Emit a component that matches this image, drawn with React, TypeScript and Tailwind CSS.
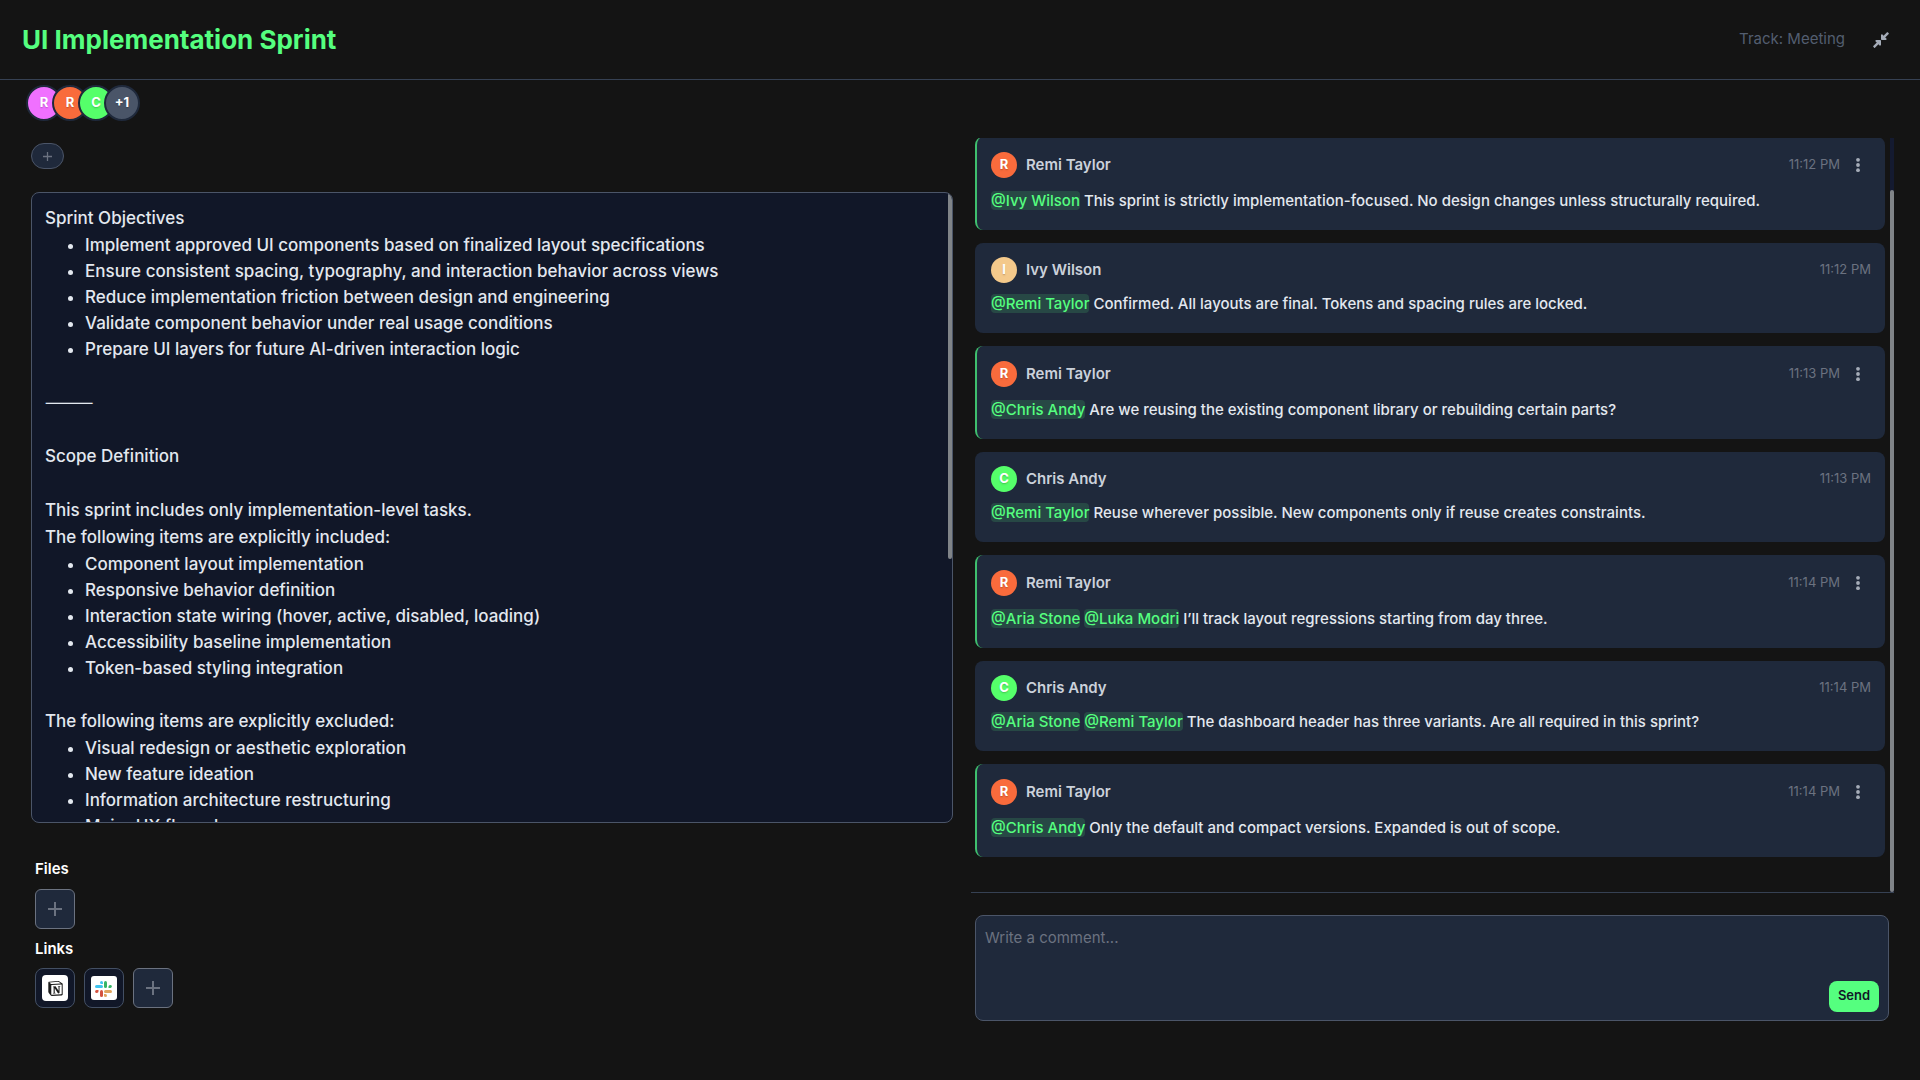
import React from "react";
import { FaCompressAlt } from "react-icons/fa";
import { SiNotion } from "react-icons/si";
import { clsx } from "clsx";

type Block =
  | { kind: "text"; text: string }
  | { kind: "gap" }
  | { kind: "list"; items: string[] };

const notes: Block[] = [
  { kind: "text", text: "Sprint Objectives" },
  {
    kind: "list",
    items: [
      "Implement approved UI components based on finalized layout specifications",
      "Ensure consistent spacing, typography, and interaction behavior across views",
      "Reduce implementation friction between design and engineering",
      "Validate component behavior under real usage conditions",
      "Prepare UI layers for future AI-driven interaction logic",
    ],
  },
  { kind: "gap" },
  { kind: "text", text: "⸻" },
  { kind: "gap" },
  { kind: "text", text: "Scope Definition" },
  { kind: "gap" },
  { kind: "text", text: "This sprint includes only implementation-level tasks." },
  { kind: "text", text: "The following items are explicitly included:" },
  {
    kind: "list",
    items: [
      "Component layout implementation",
      "Responsive behavior definition",
      "Interaction state wiring (hover, active, disabled, loading)",
      "Accessibility baseline implementation",
      "Token-based styling integration",
    ],
  },
  { kind: "gap" },
  { kind: "text", text: "The following items are explicitly excluded:" },
  {
    kind: "list",
    items: [
      "Visual redesign or aesthetic exploration",
      "New feature ideation",
      "Information architecture restructuring",
      "Major UX flow changes",
    ],
  },
];

const people = {
  remi: { name: "Remi Taylor", color: "bg-[#f96b3c]" },
  ivy: { name: "Ivy Wilson", color: "bg-[#f4c98b]" },
  chris: { name: "Chris Andy", color: "bg-[#55ff6a]" },
};

const comments: {
  from: keyof typeof people;
  time: string;
  mentions: string[];
  text: string;
}[] = [
  {
    from: "remi",
    time: "11:12 PM",
    mentions: ["Ivy Wilson"],
    text: "This sprint is strictly implementation-focused. No design changes unless structurally required.",
  },
  {
    from: "ivy",
    time: "11:12 PM",
    mentions: ["Remi Taylor"],
    text: "Confirmed. All layouts are final. Tokens and spacing rules are locked.",
  },
  {
    from: "remi",
    time: "11:13 PM",
    mentions: ["Chris Andy"],
    text: "Are we reusing the existing component library or rebuilding certain parts?",
  },
  {
    from: "chris",
    time: "11:13 PM",
    mentions: ["Remi Taylor"],
    text: "Reuse wherever possible. New components only if reuse creates constraints.",
  },
  {
    from: "remi",
    time: "11:14 PM",
    mentions: ["Aria Stone", "Luka Modri"],
    text: "I’ll track layout regressions starting from day three.",
  },
  {
    from: "chris",
    time: "11:14 PM",
    mentions: ["Aria Stone", "Remi Taylor"],
    text: "The dashboard header has three variants. Are all required in this sprint?",
  },
  {
    from: "remi",
    time: "11:14 PM",
    mentions: ["Chris Andy"],
    text: "Only the default and compact versions. Expanded is out of scope.",
  },
];

const members = [
  { label: "R", color: "bg-[#f070ff]" },
  { label: "R", color: "bg-[#f96b3c]" },
  { label: "C", color: "bg-[#55ff6a]" },
  { label: "+1", color: "bg-[#4a5568]" },
];

const PlusIcon = ({ className }: { className?: string }) => (
  <svg viewBox="0 0 14 14" className={className} aria-hidden="true">
    <path d="M7 0v14M0 7h14" stroke="currentColor" strokeWidth="2" />
  </svg>
);

const DotsIcon = () => (
  <svg viewBox="0 0 16 16" className="size-4" fill="currentColor" aria-hidden="true">
    <circle cx="8" cy="2.8" r="1.9" />
    <circle cx="8" cy="8" r="1.9" />
    <circle cx="8" cy="13.2" r="1.9" />
  </svg>
);

const SlackIcon = () => (
  <svg viewBox="0 0 26 24" className="h-6 w-[26px]" aria-hidden="true">
    <rect width="26" height="24" rx="3" fill="#fff" />
    <g fill="#40c4f0">
      <rect x="4" y="9" width="8" height="3" rx="1.5" />
      <path d="M12 8H10.500A1.500 1.500 0 1 1 12 6.500z" />
    </g>
    <g fill="#36b567">
      <rect x="13" y="5" width="3" height="7" rx="1.5" />
      <path d="M17.500 12v-1.500A1.700 1.500 0 1 1 19.500 12z" />
    </g>
    <g fill="#e0a45e">
      <rect x="13" y="14" width="8" height="3" rx="1.5" />
      <path d="M13 18h1.500a1.500 1.500 0 1 1-1.500 1.500z" />
    </g>
    <g fill="#d4523f">
      <rect x="9" y="14" width="3" height="7" rx="1.5" />
      <path d="M7.500 14v1.500A1.700 1.500 0 1 1 5.500 14z" />
    </g>
  </svg>
);

const Comment = ({ from, time, mentions, text }: (typeof comments)[number]) => {
  const { name, color } = people[from];
  const mine = from === "remi";

  return (
    <li
      className={clsx(
        "shrink-0 rounded-lg bg-[#1f293b] pr-[14px]",
        mine
          ? "h-[93px] border-l-2 border-[#3fbf6e] pl-[14px] pt-[15px]"
          : "h-[90px] pl-4 pt-[14px]"
      )}
    >
      <div className="flex h-[26px] items-center">
        <span
          className={clsx(
            "flex size-[26px] items-center justify-center rounded-full text-[13px] font-bold text-white text-shadow-sm",
            color
          )}
        >
          {name[0]}
        </span>
        <h3 className="ml-[9px] text-[15px] font-semibold text-[#cbd1da]">{name}</h3>
        <time className="ml-auto text-[13px] text-[#6b7280]">{time}</time>
        {mine && (
          <button type="button" aria-label="Comment options" className="ml-2.5 mr-[5px] text-[#a5acb8]">
            <DotsIcon />
          </button>
        )}
      </div>
      <p
        className={clsx(
          "text-[15px] font-medium leading-6 text-[#e3e8ef]",
          mine ? "mt-[11px]" : "mt-[9px]"
        )}
      >
        {mentions.map((m) => (
          <React.Fragment key={m}>
            <span className="rounded-sm bg-[#55ff7f]/15 text-[#55ff7f]">@{m}</span>{" "}
          </React.Fragment>
        ))}
        {text}
      </p>
    </li>
  );
};

const NoteBlock = ({ block }: { block: Block }) => {
  if (block.kind === "gap") return <div className="h-[27px]" />;
  if (block.kind === "text") return <p className="h-[27px] leading-[27px]">{block.text}</p>;

  return (
    <ul className="list-disc pl-10 leading-[26px]">
      {block.items.map((item) => (
        <li key={item}>{item}</li>
      ))}
    </ul>
  );
};

const App = () => {
  return (
    <div className="flex h-screen flex-col bg-[#141414] font-['Inter',sans-serif] text-[#e3e8ef]">
      <header className="flex h-20 shrink-0 items-center border-b border-[#364153] px-[22px]">
        <h1 className="text-[26px] font-bold text-[#55ff7f]">UI Implementation Sprint</h1>
        <span className="ml-auto text-[15px] text-[#535e70]">Track: Meeting</span>
        <button type="button" aria-label="Collapse" className="ml-7 mr-[9px] text-[#a5acb8]">
          <FaCompressAlt className="h-[18px] w-4" />
        </button>
      </header>

      <div className="flex shrink-0 px-[26px] pt-[5px]">
        {members.map((m, i) => (
          <span
            key={i}
            className={clsx(
              "flex size-9 items-center justify-center rounded-full border-2 border-[#1f293b] text-[13px] font-bold text-white text-shadow-sm",
              i > 0 && "-ml-2.5",
              m.color
            )}
          >
            {m.label}
          </span>
        ))}
      </div>

      <main className="grid min-h-0 flex-1 grid-cols-[953fr_967fr] grid-rows-1 pb-[59px] pt-[17px]">
        <section className="flex min-w-0 flex-col pl-[31px] pt-[5px]">
          <button
            type="button"
            aria-label="Add tag"
            className="flex h-[26px] w-[33px] items-center justify-center rounded-full border border-[#4b5568] bg-[#1f293b] text-[#6b7280]"
          >
            <PlusIcon className="size-[9px]" />
          </button>

          <div className="relative mt-[23px] h-[631px] overflow-hidden rounded-lg border border-[#4b5568] bg-[#111728]">
            <div className="h-full overflow-y-auto px-[13px] pt-3 text-[17px] font-medium [scrollbar-width:none]">
              {notes.map((block, i) => (
                <NoteBlock key={i} block={block} />
              ))}
            </div>
            <div className="absolute right-0 top-0 h-[366px] w-1 rounded-full bg-[#808488]" />
          </div>

          <div className="pl-1 pt-9">
            <h2 className="text-[15px] font-semibold leading-5 text-white">Files</h2>
            <button
              type="button"
              aria-label="Add file"
              className="mt-[10px] flex size-10 items-center justify-center rounded-md border border-[#6b7280] bg-[#1f293b] text-[#6b7280]"
            >
              <PlusIcon className="size-[14px]" />
            </button>
            <h2 className="mt-[10px] text-[15px] font-semibold leading-5 text-white">Links</h2>
            <div className="mt-[9px] flex gap-[9px]">
              <a
                href="#notion"
                aria-label="Notion"
                className="flex size-10 items-center justify-center rounded-lg border border-[#434f63] bg-[#111728]"
              >
                <span className="flex size-[26px] items-center justify-center rounded bg-white text-[#1a1a1a]">
                  <SiNotion className="size-[15px]" />
                </span>
              </a>
              <a
                href="#slack"
                aria-label="Slack"
                className="flex size-10 items-center justify-center rounded-lg border border-[#434f63] bg-[#111728]"
              >
                <SlackIcon />
              </a>
              <button
                type="button"
                aria-label="Add link"
                className="flex size-10 items-center justify-center rounded-md border border-[#6b7280] bg-[#1f293b] text-[#6b7280]"
              >
                <PlusIcon className="size-[14px]" />
              </button>
            </div>
          </div>
        </section>

        <section className="ml-[18px] mr-[26px] flex min-h-0 min-w-0 flex-col">
          <div className="relative flex min-h-0 flex-1 flex-col justify-end overflow-hidden border-b border-[#364153] pb-[35px] pl-1 pr-[9px]">
            <ul className="flex flex-col gap-[13px]">
              {comments.map((c, i) => (
                <Comment key={i} {...c} />
              ))}
            </ul>
            <div className="absolute bottom-0 right-0 top-0 w-1 bg-[#141a30]">
              <div className="absolute bottom-0 h-[702px] w-1 rounded-full bg-[#808488]" />
            </div>
          </div>

          <form className="relative ml-1 mr-[5px] mt-[22px] h-[106px] shrink-0">
            <textarea
              aria-label="Write a comment"
              placeholder="Write a comment..."
              className="block size-full resize-none rounded-lg border border-[#4b5568] bg-[#1f293b] px-[9px] py-[11px] text-[15px] placeholder:text-[#6b7280]"
            />
            <button
              type="button"
              className="absolute bottom-[9px] right-[10px] h-[31px] w-[50px] rounded-lg bg-[#55ff7f] pb-px text-[13px] font-semibold text-[#111728]"
            >
              Send
            </button>
          </form>
        </section>
      </main>
    </div>
  );
};

export default App;
